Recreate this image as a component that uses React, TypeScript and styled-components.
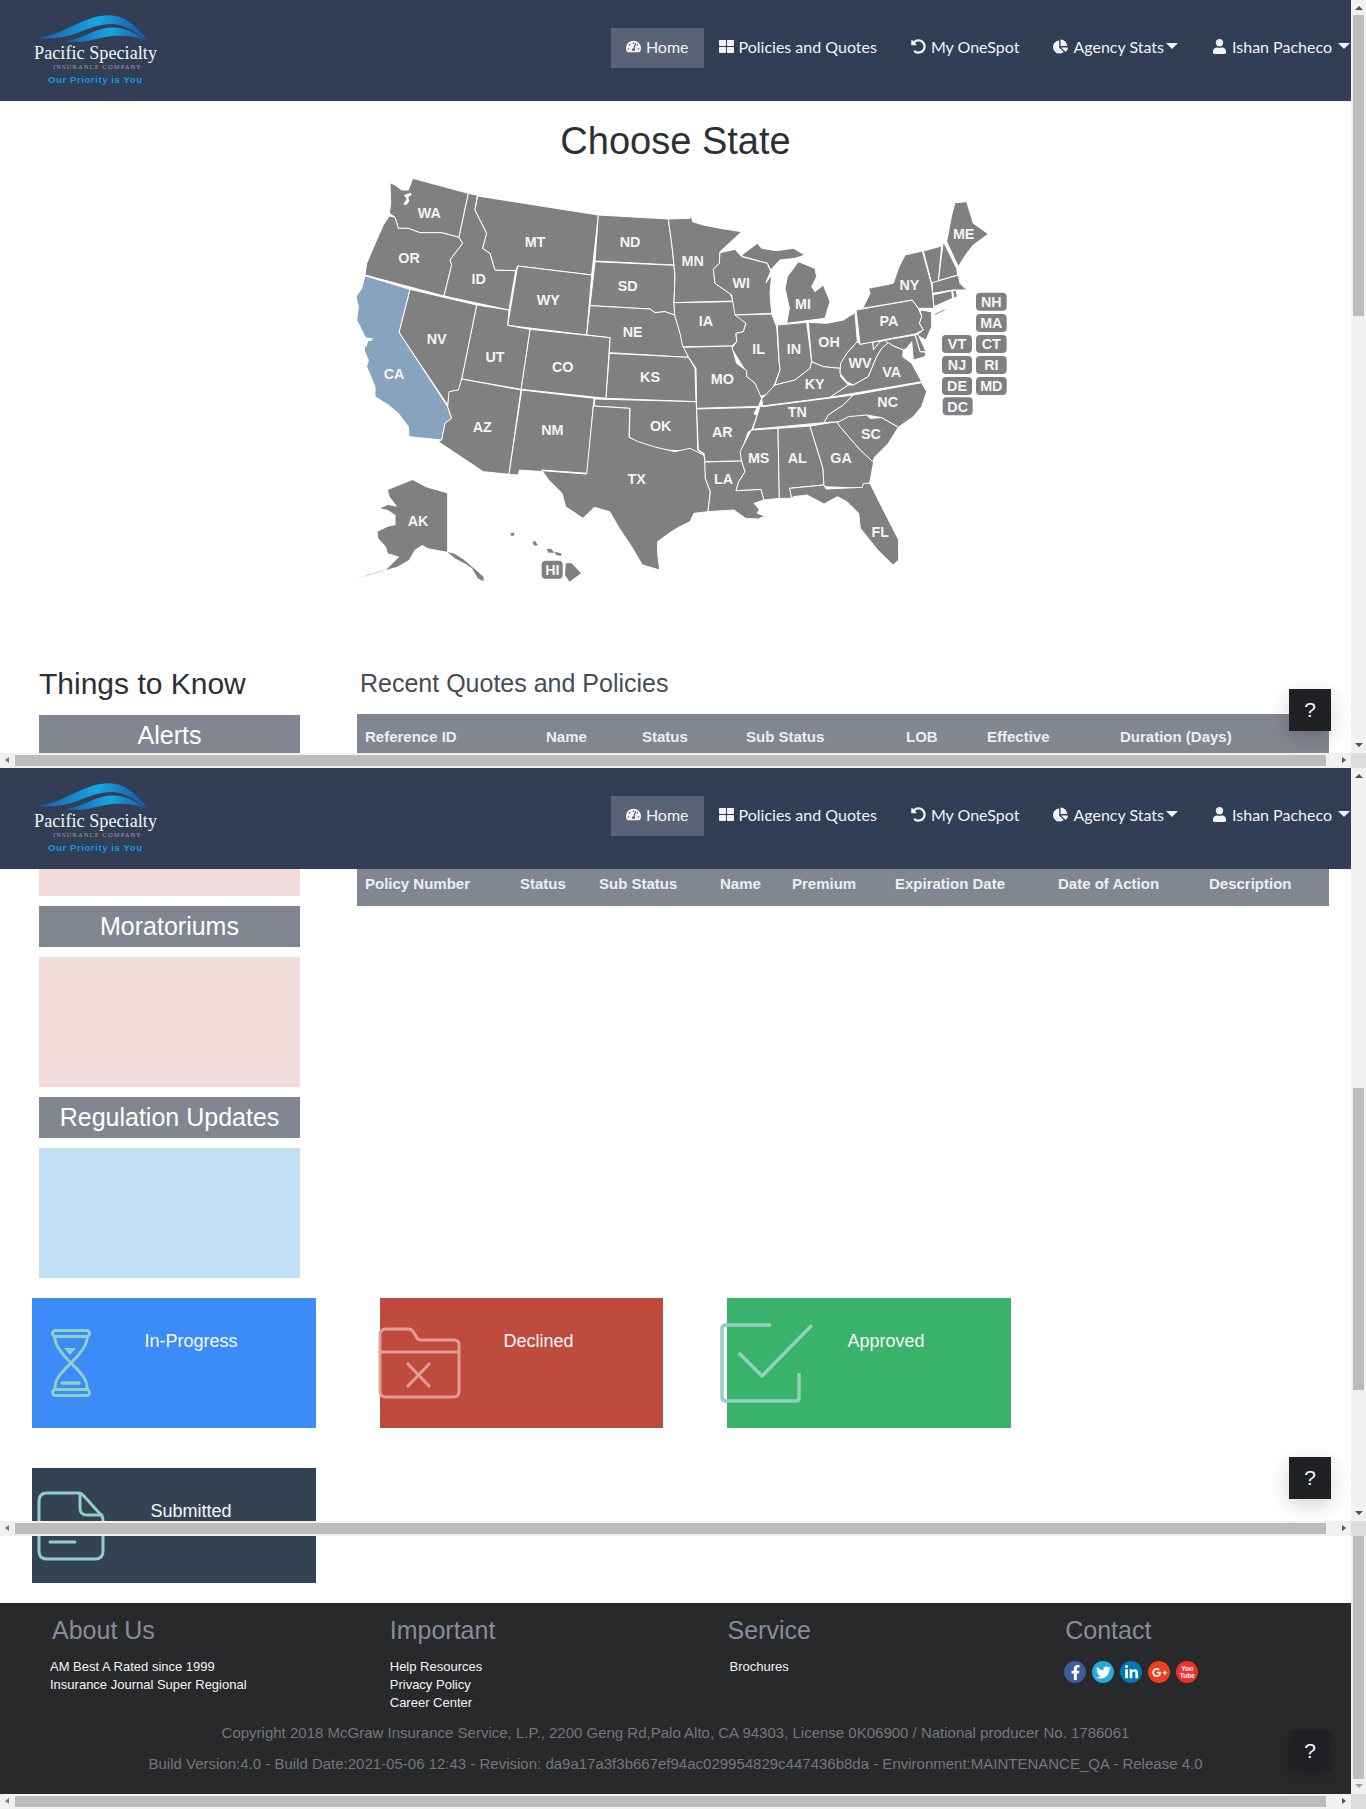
import React from "react";
import styled, { createGlobalStyle } from "styled-components";
import {
  FaTachometerAlt,
  FaThLarge,
  FaUndoAlt,
  FaChartPie,
  FaUser,
  FaFacebookF,
  FaTwitter,
  FaLinkedinIn,
  FaGooglePlusG,
} from "react-icons/fa";

const GlobalStyle = createGlobalStyle`
  html, body {
    margin: 0;
    padding: 0;
    background: #fff;
  }
  body {
    font-family: "Liberation Sans", Arial, sans-serif;
  }
  * {
    box-sizing: border-box;
  }
`;

const colors = {
  navy: "#323e55",
  navActive: "#5a6376",
  slate: "#828690",
  grey: "#808080",
  caBlue: "#87a3bd",
  pink: "#f1dcdb",
  sky: "#c2e0f3",
  footer: "#28292b",
  heading: "#2b3036",
  teal: "#8fd0c4",
};

/* page */

const Shell = styled.div`
  position: relative;
  width: 1366px;
  height: 1809px;
  overflow: hidden;
  padding-right: 15px;
`;

/* header */

const HeaderBar = styled.header`
  display: flex;
  align-items: flex-start;
  justify-content: space-between;
  width: 1351px;
  height: 101px;
  background: ${colors.navy};
`;

const LogoSvg = styled.svg`
  display: block;
  flex: none;
  width: 170px;
  height: 101px;
`;

const Nav = styled.nav`
  display: flex;
  align-items: center;
  height: 40px;
  margin-top: 28px;
`;

const NavItem = styled.a<{ $active?: boolean; $gap?: number }>`
  display: flex;
  align-items: center;
  gap: 5px;
  height: 40px;
  padding: 0 15px 4px;
  margin-right: ${({ $gap }) => $gap ?? 4}px;
  background: ${({ $active }) => ($active ? colors.navActive : "transparent")};
  color: #f1f2f4;
  font-family: "Lato", sans-serif;
  font-size: 16px;
  white-space: nowrap;

  svg {
    font-size: 15px;
  }

  &:last-child {
    padding-right: 1px;
  }
`;

const Caret = styled.span<{ $offset: number }>`
  width: 0;
  height: 0;
  margin-left: ${({ $offset }) => $offset}px;
  border-left: 6px solid transparent;
  border-right: 6px solid transparent;
  border-top: 6px solid #f1f2f4;
`;

const SecondHeader = styled.div`
  position: absolute;
  top: 768px;
  left: 0;
`;

const PacificLogo = () => (
  <LogoSvg viewBox="0 0 170 101">
    <defs>
      <linearGradient id="wave" x1="0" y1="0" x2="1" y2="0">
        <stop offset="0" stopColor="#1a5aa8" />
        <stop offset="0.55" stopColor="#16a7e2" />
        <stop offset="1" stopColor="#1c4f9c" />
      </linearGradient>
    </defs>
    <path
      d="M36 38 C58 36 72 24 92 18 C108 13 122 15 132 24 C138 29 144 35 148 41 C138 34 130 28 120 25 C106 22 92 27 80 32 C66 38 50 39 36 38 Z"
      fill="url(#wave)"
    />
    <path
      d="M66 41 C82 39 90 31 106 28 C120 26 132 30 147 41 C134 36 124 35 112 36 C96 38 84 44 66 41 Z"
      fill="url(#wave)"
    />
    <text x="34" y="59" fontFamily="'Liberation Serif', serif" fontSize="19.5" fill="#f2f3f5" textLength="123" lengthAdjust="spacingAndGlyphs">
      Pacific Specialty
    </text>
    <text x="53" y="69" fontFamily="'Liberation Serif', serif" fontSize="6.5" fill="#9ba1ad" textLength="88">
      INSURANCE COMPANY
    </text>
    <text x="48" y="83" fontFamily="'Liberation Sans', sans-serif" fontSize="9.5" fontWeight="700" fill="#0a9fe0" textLength="94">
      Our Priority is You
    </text>
  </LogoSvg>
);

const Header = () => (
  <HeaderBar>
    <PacificLogo />
    <Nav>
      <NavItem $active $gap={0}>
        <FaTachometerAlt />
        Home
      </NavItem>
      <NavItem>
        <FaThLarge />
        Policies and Quotes
      </NavItem>
      <NavItem>
        <FaUndoAlt />
        My OneSpot
      </NavItem>
      <NavItem>
        <FaChartPie />
        Agency Stats
        <Caret $offset={-3} />
      </NavItem>
      <NavItem $gap={0}>
        <FaUser />
        Ishan Pacheco
        <Caret $offset={1} />
      </NavItem>
    </Nav>
  </HeaderBar>
);

/* map */

const Title = styled.h1`
  margin: 0;
  padding-top: 16px;
  height: 64px;
  font-size: 38px;
  line-height: 48px;
  font-weight: 400;
  text-align: center;
  color: ${colors.heading};
`;

const MapSvg = styled.svg`
  display: block;
  width: 671px;
  height: 425px;
  margin: 0 auto;
`;

const StatePath = styled.path<{ $active?: boolean }>`
  fill: ${({ $active }) => ($active ? colors.caBlue : colors.grey)};
  stroke: #fff;
  stroke-width: 3;
  stroke-linejoin: round;
`;

const IslandPath = styled.path`
  fill: ${colors.grey};
`;

const WaterPath = styled.path`
  fill: #fff;
`;

const StateLabel = styled.text`
  fill: #f4f4f4;
  font-family: "Liberation Sans", sans-serif;
  font-weight: 700;
  font-size: 43px;
  text-anchor: middle;
  dominant-baseline: central;
`;

const BadgeRect = styled.rect`
  fill: ${colors.grey};
`;

type StateDef = { name: string; d: string; x: number; y: number; active?: boolean };

const westStates: StateDef[] = [
  { name: "WA", x: 268, y: 160, d: "M150 68 L165 75 L185 90 L205 90 L218 55 L385 100 L357 232 L305 218 L240 218 L205 205 L175 205 L165 172 L148 160 L152 130 Z" },
  { name: "OR", x: 207, y: 295, d: "M148 168 L165 172 L175 205 L205 205 L240 218 L305 218 L357 232 L368 250 L330 300 L335 315 L312 408 L75 345 L80 310 L110 240 L130 195 Z" },
  { name: "ID", x: 416, y: 358, d: "M385 100 L412 106 L405 150 L440 220 L428 265 L450 280 L465 330 L527 332 L507 450 L312 408 L335 315 L330 300 L368 250 L357 232 Z" },
  { name: "MT", x: 585, y: 245, d: "M413 108 L775 165 L755 345 L533 318 L527 332 L465 330 L450 280 L428 265 L440 220 L405 150 Z" },
  { name: "ND", x: 870, y: 245, d: "M775 165 L985 177 L995 250 L1002 315 L765 303 Z" },
  { name: "SD", x: 863, y: 378, d: "M765 305 L1002 316 L1005 350 L1002 430 L1004 465 L975 455 L945 458 L930 447 L750 437 Z" },
  { name: "WY", x: 625, y: 420, d: "M533 318 L755 345 L740 525 L503 496 Z" },
  { name: "NE", x: 878, y: 517, d: "M750 437 L930 447 L945 458 L975 455 L1004 465 L1020 515 L1030 555 L1045 592 L808 578 L810 533 L740 525 Z" },
  { name: "CO", x: 668, y: 622, d: "M570 508 L810 533 L798 715 L543 688 Z" },
  { name: "KS", x: 930, y: 652, d: "M808 580 L1045 592 L1065 625 L1068 725 L798 715 Z" },
  { name: "UT", x: 465, y: 590, d: "M410 435 L507 450 L503 496 L570 508 L543 688 L365 657 Z" },
  { name: "NV", x: 290, y: 538, d: "M210 388 L410 435 L365 657 L357 690 L330 695 L323 735 L177 517 Z" },
  { name: "CA", x: 162, y: 642, active: true, d: "M75 347 L210 388 L177 517 L323 740 L335 775 L315 790 L305 840 L207 830 L205 800 L175 760 L145 735 L105 710 L105 680 L80 620 L85 600 L72 570 L80 540 L50 480 L55 440 L48 410 L65 385 Z" },
  { name: "AZ", x: 427, y: 800, d: "M365 657 L543 690 L507 943 L430 935 L295 845 L305 840 L315 790 L335 775 L323 740 L327 695 L355 690 Z" },
  { name: "NM", x: 637, y: 810, d: "M545 690 L762 715 L760 737 L742 940 L605 930 L610 935 L538 930 L535 945 L507 943 Z" },
  { name: "OK", x: 962, y: 798, d: "M765 717 L1068 725 L1070 745 L1073 870 L1091 884 L1050 875 L1020 872 L970 870 L930 860 L890 848 L868 830 L870 745 L762 738 Z" },
  { name: "TX", x: 890, y: 958, d: "M760 738 L869 745 L867 832 L895 845 L941 860 L1004 875 L1050 865 L1091 885 L1096 905 L1096 955 L1111 995 L1104 1055 L1062 1060 L1050 1085 L1010 1105 L987 1120 L953 1145 L953 1180 L959 1230 L907 1215 L875 1160 L838 1105 L809 1055 L763 1042 L729 1075 L677 1040 L666 1000 L626 960 L606 932 L740 942 Z" },
];

const eastStates: StateDef[] = [
  { name: "MN", x: 38, y: 303, d: "M-35 177 L30 175 L32 160 L38 185 L70 195 L120 205 L185 215 L120 275 L118 310 L100 328 L105 370 L150 400 L160 423 L-18 428 L-15 350 L-18 315 L-25 250 Z" },
  { name: "IA", x: 78, y: 484, d: "M-18 428 L160 425 L172 462 L198 490 L190 515 L168 520 L170 545 L155 558 L8 560 L0 520 L-16 465 Z" },
  { name: "WI", x: 184, y: 370, d: "M120 278 L165 268 L185 290 L262 310 L272 335 L265 350 L258 368 L275 345 L270 400 L275 460 L165 465 L155 405 L105 370 L100 328 L118 310 Z" },
  { name: "MI", x: 369, y: 432, d: "M355 305 L405 325 L410 350 L395 380 L405 395 L430 375 L450 425 L435 475 L320 490 L328 445 L315 385 L322 350 Z" },
  { name: "IL", x: 236, y: 568, d: "M165 465 L275 462 L290 500 L297 600 L300 630 L285 670 L270 700 L240 710 L225 670 L200 650 L195 630 L155 565 L170 545 L168 520 L190 515 L198 490 Z" },
  { name: "IN", x: 342, y: 568, d: "M292 495 L380 487 L395 605 L390 625 L345 660 L285 675 L300 630 L297 600 Z" },
  { name: "OH", x: 447, y: 546, d: "M385 487 L440 490 L490 480 L525 458 L532 545 L500 580 L480 625 L430 620 L395 605 Z" },
  { name: "MO", x: 127, y: 657, d: "M10 562 L155 558 L170 610 L200 632 L200 650 L225 670 L245 715 L235 740 L215 740 L50 745 L48 625 L25 590 Z" },
  { name: "AR", x: 127, y: 817, d: "M50 747 L232 742 L222 762 L232 765 L215 810 L205 815 L182 880 L185 903 L75 905 L72 880 L55 870 Z" },
  { name: "LA", x: 131, y: 958, d: "M74 906 L185 903 L195 935 L176 965 L168 992 L243 988 L252 1020 L222 1030 L238 1048 L232 1060 L275 1075 L250 1070 L235 1077 L197 1075 L162 1050 L84 1055 L91 995 L76 955 Z" },
  { name: "MS", x: 236, y: 895, d: "M214 810 L294 805 L298 1015 L252 1020 L243 988 L168 992 L176 965 L195 935 L185 903 L180 875 Z" },
  { name: "AL", x: 352, y: 895, d: "M294 805 L390 798 L429 925 L432 975 L329 985 L335 1015 L298 1015 Z" },
  { name: "GA", x: 483, y: 895, d: "M390 798 L472 785 L480 800 L541 870 L581 905 L570 965 L550 985 L432 980 L429 925 Z" },
  { name: "FL", x: 601, y: 1115, d: "M329 985 L432 975 L438 987 L547 982 L550 970 L570 970 L610 1050 L656 1140 L656 1200 L639 1215 L593 1170 L541 1105 L536 1060 L501 1025 L472 1010 L432 1032 L381 1005 L340 1010 L335 1015 Z" },
  { name: "TN", x: 352, y: 757, d: "M248 740 L520 705 L490 735 L445 765 L432 788 L218 808 L232 765 L240 738 Z" },
  { name: "KY", x: 404, y: 672, d: "M250 712 L285 675 L345 660 L390 625 L395 605 L430 620 L480 625 L482 650 L505 675 L450 712 L248 738 L245 715 Z" },
  { name: "WV", x: 540, y: 610, d: "M500 580 L532 545 L540 553 L578 545 L580 570 L600 545 L618 540 L625 555 L605 565 L590 590 L565 650 L520 675 L500 665 L480 640 L482 610 Z" },
  { name: "VA", x: 635, y: 636, d: "M625 548 L640 558 L670 570 L668 590 L695 610 L725 665 L450 712 L505 675 L520 675 L565 650 L590 590 L605 565 Z" },
  { name: "NC", x: 623, y: 727, d: "M520 705 L725 668 L740 695 L725 740 L700 770 L655 802 L605 773 L560 765 L475 785 L432 788 L445 765 L490 735 Z" },
  { name: "SC", x: 573, y: 822, d: "M472 788 L505 770 L560 765 L570 775 L605 773 L655 802 L625 850 L585 890 L578 905 L541 870 L480 800 Z" },
  { name: "PA", x: 627, y: 484, d: "M528 450 L697 420 L715 445 L725 470 L718 490 L730 510 L705 522 L540 553 Z" },
  { name: "NY", x: 688, y: 376, d: "M548 445 L570 400 L565 385 L640 370 L655 325 L675 285 L727 273 L755 375 L762 445 L715 445 L697 420 Z" },
  { name: "ME", x: 851, y: 222, d: "M800 245 L815 165 L825 128 L860 125 L880 190 L925 222 L880 255 L860 280 L835 320 Z" },
];

const smallStates: string[] = [
  "M720 450 L755 455 L755 500 L738 540 L710 525 L730 510 L718 490 L725 470 Z",
  "M705 522 L720 575 L738 575 L715 525 Z",
  "M540 553 L705 525 L720 575 L738 577 L735 590 L700 600 L695 545 L680 565 L670 570 L640 558 L625 550 L600 545 L580 570 L578 545 Z",
  "M730 273 L785 258 L775 365 L755 370 Z",
  "M790 245 L830 325 L833 345 L775 362 Z",
  "M757 368 L835 345 L840 370 L860 390 L820 390 L757 400 Z",
  "M758 405 L815 392 L818 415 L762 440 Z",
  "M818 392 L828 390 L832 410 L822 415 Z",
  "M760 462 L800 445 L795 452 L765 466 Z",
  "M185 285 L232 250 L245 265 L290 272 L340 265 L375 285 L345 295 L300 300 L272 330 L262 310 L190 290 Z",
];

const badges = [
  { name: "NH", x: 888, y: 398, w: 92 },
  { name: "MA", x: 888, y: 462, w: 92 },
  { name: "CT", x: 888, y: 525, w: 92 },
  { name: "RI", x: 888, y: 588, w: 92 },
  { name: "MD", x: 888, y: 651, w: 92 },
  { name: "VT", x: 786, y: 525, w: 90 },
  { name: "NJ", x: 786, y: 588, w: 90 },
  { name: "DE", x: 786, y: 651, w: 90 },
  { name: "DC", x: 788, y: 712, w: 90 },
];

const USMap = () => (
  <MapSvg viewBox="0 15 2013 1275">
    {westStates.map((s) => (
      <StatePath key={s.name} d={s.d} $active={s.active} />
    ))}
    <WaterPath d="M190 132 L200 118 L192 105 L212 98 L215 104 L205 112 L208 124 L198 136 Z" />
    <WaterPath d="M72 532 L98 535 L96 542 L84 544 L80 560 L72 556 Z" />
    {westStates.map((s) => (
      <StateLabel key={s.name} x={s.x} y={s.y}>
        {s.name}
      </StateLabel>
    ))}
    <g transform="translate(1020 0)">
      {smallStates.map((d) => (
        <StatePath key={d} d={d} />
      ))}
      {eastStates.map((s) => (
        <StatePath key={s.name} d={s.d} />
      ))}
      {eastStates.map((s) => (
        <StateLabel key={s.name} x={s.x} y={s.y}>
          {s.name}
        </StateLabel>
      ))}
      {badges.map((b) => (
        <g key={b.name}>
          <BadgeRect x={b.x} y={b.y} width={b.w} height={54} rx={12} />
          <StateLabel x={b.x + b.w / 2} y={b.y + 28}>
            {b.name}
          </StateLabel>
        </g>
      ))}
    </g>
    <g transform="translate(0 720) scale(1.148 1)">
      <IslandPath d="M125 270 L190 240 L225 262 L280 280 L280 455 L230 445 L215 435 L195 450 L180 480 L150 500 L120 510 L155 470 L125 460 L120 440 L100 415 L98 395 L125 380 L145 375 L145 345 L125 330 L105 325 L125 315 L150 320 L130 290 Z" />
      <IslandPath d="M280 455 L300 462 L322 478 L345 500 L375 530 L375 544 L360 535 L345 505 L325 490 L300 475 Z" />
      <IslandPath d="M120 510 L95 518 L60 530 L40 538 L70 526 L105 514 Z" />
      <IslandPath d="M445 400 L455 398 L455 407 L447 407 Z" />
      <IslandPath d="M503 425 L510 423 L517 436 L507 437 Z" />
      <IslandPath d="M540 446 L552 447 L560 458 L545 458 Z" />
      <IslandPath d="M560 455 L578 460 L578 468 L565 465 Z" />
      <IslandPath d="M590 490 L605 490 L630 520 L600 545 L588 525 Z" />
    </g>
    <StateLabel x={234} y={1084}>AK</StateLabel>
    <BadgeRect x={605} y={1202} width={63} height={54} rx={12} />
    <StateLabel x={637} y={1230}>HI</StateLabel>
  </MapSvg>
);

/* things to know + tables */

const InfoRow = styled.section`
  display: grid;
  grid-template-columns: 261px 972px;
  column-gap: 57px;
  padding: 75px 0 0 39px;
`;

const SideHeading = styled.h2`
  margin: 0 0 12px;
  font-size: 30px;
  line-height: 38px;
  font-weight: 400;
  color: ${colors.heading};
`;

const Panel = styled.div`
  display: flex;
  flex-direction: column;
  gap: 10px;
`;

const PanelTitle = styled.div`
  height: 41px;
  background: ${colors.slate};
  color: #fff;
  font-size: 25px;
  line-height: 41px;
  text-align: center;
`;

const PanelBody = styled.div<{ $tone: string }>`
  height: 130px;
  background: ${({ $tone }) => $tone};
`;

const TableColumn = styled.div`
  padding-top: 4px;
`;

const TableHeading = styled.h3`
  margin: 0 0 16px 3px;
  font-size: 25px;
  line-height: 29px;
  font-weight: 400;
  color: #464c55;
`;

const HeadRow = styled.div<{ $columns: string; $height: number; $gapAfter?: number }>`
  display: grid;
  grid-template-columns: ${({ $columns }) => $columns};
  align-items: center;
  height: ${({ $height }) => $height}px;
  padding-left: 8px;
  margin-bottom: ${({ $gapAfter }) => $gapAfter ?? 0}px;
  background: ${colors.slate};
`;

const HeadCell = styled.span`
  color: #eceef0;
  font-size: 15px;
  font-weight: 700;
  white-space: nowrap;
`;

const quoteColumns = ["Reference ID", "Name", "Status", "Sub Status", "LOB", "Effective", "Duration (Days)"];
const policyColumns = ["Policy Number", "Status", "Sub Status", "Name", "Premium", "Expiration Date", "Date of Action", "Description"];

/* status cards */

const CardGrid = styled.section`
  display: grid;
  grid-template-columns: 284px 283px 284px;
  column-gap: 64px;
  row-gap: 40px;
  margin: 20px 0 20px 32px;
`;

const Card = styled.div<{ $bg: string; $tall?: boolean }>`
  position: relative;
  height: ${({ $tall }) => ($tall ? 130 : 115)}px;
  padding: 32px 0 0 34px;
  background: ${({ $bg }) => $bg};
`;

const CardLabel = styled.div`
  color: #f8f8f8;
  font-size: 18px;
  line-height: 22px;
  text-align: center;
`;

const CardIcon = styled.svg<{ $left: number; $top: number; $tint: string }>`
  position: absolute;
  left: ${({ $left }) => $left}px;
  top: ${({ $top }) => $top}px;
  fill: none;
  stroke: ${({ $tint }) => $tint};
  stroke-linecap: round;
  stroke-linejoin: round;
`;

const HourglassIcon = () => (
  <CardIcon $left={19} $top={31} $tint={colors.teal} width="40" height="68" viewBox="0 0 40 68" strokeWidth="3">
    <rect x="1.5" y="1.5" width="37" height="6" rx="3" />
    <rect x="1.5" y="60.5" width="37" height="6" rx="3" />
    <path d="M4 8 C3 16 12 26 20 34 C28 42 37 50 36 60" />
    <path d="M36 8 C37 16 28 26 20 34 C12 42 3 50 4 60" />
    <path d="M13 19 H25 L19 26 Z" fill={colors.teal} stroke="none" />
    <path d="M11 54 H28" strokeWidth="3.5" />
  </CardIcon>
);

const FolderIcon = () => (
  <CardIcon $left={-2} $top={29} $tint="#e09e96" width="84" height="73" viewBox="0 0 84 73" strokeWidth="3">
    <path d="M2 8 Q2 2 8 2 H30 Q34 2 36 6 L39 11 Q40 13 44 13 H76 Q81 13 81 18 V64 Q81 70 75 70 H8 Q2 70 2 64 Z" />
    <path d="M2 25 H81" />
    <path d="M29 36 L52 60 M52 36 L29 60" strokeLinecap="butt" />
  </CardIcon>
);

const CheckIcon = () => (
  <CardIcon $left={-7} $top={25} $tint="#93d0bf" width="94" height="82" viewBox="0 0 94 82" strokeWidth="3.5">
    <path d="M51 2 H6 Q2 2 2 6 V74 Q2 78 6 78 H76 Q79 78 79 75 V50" strokeLinecap="butt" />
    <path d="M19 30 L42 53 L92 2" strokeLinecap="butt" />
  </CardIcon>
);

const DocIcon = () => (
  <CardIcon $left={5} $top={23} $tint={colors.teal} width="68" height="70" viewBox="0 0 68 70" strokeWidth="3">
    <path d="M10 2 H42 Q44 2 46 4 L64 24 Q66 26 66 29 V60 Q66 68 58 68 H10 Q2 68 2 60 V10 Q2 2 10 2 Z" />
    <path d="M43 3 V17 Q43 24 50 24 H65" />
    <path d="M13 51 H38" />
  </CardIcon>
);

/* footer */

const FooterBar = styled.footer`
  width: 1351px;
  height: 191px;
  padding-top: 13px;
  background: ${colors.footer};
`;

const FooterColumns = styled.div`
  display: grid;
  grid-template-columns: repeat(4, 337.75px);
  height: 96px;
  margin-bottom: 10px;
`;

const FooterColumn = styled.div`
  padding-left: 52px;
`;

const FooterHeading = styled.h4`
  margin: 0 0 13px;
  font-size: 25px;
  line-height: 29px;
  font-weight: 400;
  color: #878c9a;
`;

const FooterLink = styled.div<{ $indent?: number }>`
  margin-left: ${({ $indent }) => $indent ?? 0}px;
  color: #f4f4f4;
  font-size: 13px;
  line-height: 18px;
`;

const SocialRow = styled.div`
  display: flex;
  gap: 6px;
  padding-top: 3px;
  margin-left: -1px;
`;

const SocialBadge = styled.span<{ $bg: string }>`
  display: flex;
  flex-direction: column;
  align-items: center;
  justify-content: center;
  width: 22px;
  height: 22px;
  border-radius: 50%;
  background: ${({ $bg }) => $bg};
  color: #fff;
  font-size: 15px;
`;

const TubeText = styled.span`
  font-family: "Liberation Sans", sans-serif;
  font-size: 6.5px;
  line-height: 7px;
  font-weight: 700;
`;

const CopyLine = styled.p`
  margin: 0 0 9px;
  color: #74777d;
  font-size: 15px;
  line-height: 22px;
  text-align: center;
`;

/* overlays: the stitched browser scrollbars and help buttons */

const HelpButton = styled.button<{ $top: number }>`
  position: absolute;
  top: ${({ $top }) => $top}px;
  left: 1289px;
  width: 42px;
  height: 42px;
  padding: 0;
  border: 0;
  background: #1f2125;
  color: #f5f5f5;
  font-family: "Liberation Sans", sans-serif;
  font-size: 21px;
  box-shadow: 0 6px 20px rgba(0, 0, 0, 0.18);
`;

const HScroll = styled.div<{ $top: number }>`
  position: absolute;
  top: ${({ $top }) => $top}px;
  left: 0;
  display: flex;
  align-items: center;
  width: 1366px;
  height: 15px;
  background: #f1f1f1;
`;

const HThumb = styled.div`
  margin-left: 15px;
  width: 1311px;
  height: 11px;
  background: #bcbcbc;
`;

const ArrowLeft = styled.span`
  position: absolute;
  left: 5px;
  top: 4px;
  border-top: 3.5px solid transparent;
  border-bottom: 3.5px solid transparent;
  border-right: 4px solid #7a7a7a;
`;

const ArrowRight = styled.span`
  position: absolute;
  left: 1342px;
  top: 4px;
  border-top: 3.5px solid transparent;
  border-bottom: 3.5px solid transparent;
  border-left: 4px solid #505050;
`;

const Corner = styled.span`
  position: absolute;
  right: 0;
  top: 0;
  width: 15px;
  height: 15px;
  background: #dcdcdc;
`;

const VTrack = styled.div<{ $top: number; $height: number }>`
  position: absolute;
  top: ${({ $top }) => $top}px;
  left: 1351px;
  width: 15px;
  height: ${({ $height }) => $height}px;
  background: #f1f1f1;
`;

const VThumb = styled.div<{ $top: number; $height: number }>`
  position: absolute;
  top: ${({ $top }) => $top}px;
  left: 2px;
  width: 11px;
  height: ${({ $height }) => $height}px;
  background: #bcbcbc;
`;

const ArrowUp = styled.span<{ $top: number }>`
  position: absolute;
  top: ${({ $top }) => $top}px;
  left: 3.5px;
  border-left: 4px solid transparent;
  border-right: 4px solid transparent;
  border-bottom: 4px solid #505050;
`;

const ArrowDown = styled.span<{ $top: number; $tone?: string }>`
  position: absolute;
  top: ${({ $top }) => $top}px;
  left: 3.5px;
  border-left: 4px solid transparent;
  border-right: 4px solid transparent;
  border-top: 4px solid ${({ $tone }) => $tone ?? "#505050"};
`;

const BottomBar = ({ top }: { top: number }) => (
  <HScroll $top={top}>
    <HThumb />
    <ArrowLeft />
    <ArrowRight />
    <Corner />
  </HScroll>
);

export default function App() {
  return (
    <>
      <GlobalStyle />
      <Shell>
        <Header />
        <Title>Choose State</Title>
        <USMap />

        <InfoRow>
          <div>
            <SideHeading>Things to Know</SideHeading>
            <Panel>
              <PanelTitle>Alerts</PanelTitle>
              <PanelBody $tone={colors.pink} />
              <PanelTitle>Moratoriums</PanelTitle>
              <PanelBody $tone={colors.pink} />
              <PanelTitle>Regulation Updates</PanelTitle>
              <PanelBody $tone={colors.sky} />
            </Panel>
          </div>
          <TableColumn>
            <TableHeading>Recent Quotes and Policies</TableHeading>
            <HeadRow $columns="181px 96px 104px 160px 81px 133px 1fr" $height={44} $gapAfter={102}>
              {quoteColumns.map((c) => (
                <HeadCell key={c}>{c}</HeadCell>
              ))}
            </HeadRow>
            <HeadRow $columns="155px 79px 121px 72px 103px 163px 151px 1fr" $height={46}>
              {policyColumns.map((c) => (
                <HeadCell key={c}>{c}</HeadCell>
              ))}
            </HeadRow>
          </TableColumn>
        </InfoRow>

        <CardGrid>
          <Card $bg="#3b8cf8" $tall>
            <HourglassIcon />
            <CardLabel>In-Progress</CardLabel>
          </Card>
          <Card $bg="#be4b3d" $tall>
            <FolderIcon />
            <CardLabel>Declined</CardLabel>
          </Card>
          <Card $bg="#39b26a" $tall>
            <CheckIcon />
            <CardLabel>Approved</CardLabel>
          </Card>
          <Card $bg="#344354">
            <DocIcon />
            <CardLabel>Submitted</CardLabel>
          </Card>
        </CardGrid>

        <FooterBar>
          <FooterColumns>
            <FooterColumn>
              <FooterHeading>About Us</FooterHeading>
              <FooterLink $indent={-2}>AM Best A Rated since 1999</FooterLink>
              <FooterLink $indent={-2}>Insurance Journal Super Regional</FooterLink>
            </FooterColumn>
            <FooterColumn>
              <FooterHeading>Important</FooterHeading>
              <FooterLink>Help Resources</FooterLink>
              <FooterLink>Privacy Policy</FooterLink>
              <FooterLink>Career Center</FooterLink>
            </FooterColumn>
            <FooterColumn>
              <FooterHeading>Service</FooterHeading>
              <FooterLink $indent={2}>Brochures</FooterLink>
            </FooterColumn>
            <FooterColumn>
              <FooterHeading>Contact</FooterHeading>
              <SocialRow>
                <SocialBadge $bg="#3e5c9a">
                  <FaFacebookF />
                </SocialBadge>
                <SocialBadge $bg="#28a9e0">
                  <FaTwitter />
                </SocialBadge>
                <SocialBadge $bg="#0077b5">
                  <FaLinkedinIn />
                </SocialBadge>
                <SocialBadge $bg="#f13f24">
                  <FaGooglePlusG />
                </SocialBadge>
                <SocialBadge $bg="#f2302a">
                  <TubeText>You</TubeText>
                  <TubeText>Tube</TubeText>
                </SocialBadge>
              </SocialRow>
            </FooterColumn>
          </FooterColumns>
          <CopyLine>Copyright 2018 McGraw Insurance Service, L.P., 2200 Geng Rd,Palo Alto, CA 94303, License 0K06900 / National producer No. 1786061</CopyLine>
          <CopyLine>Build Version:4.0 - Build Date:2021-05-06 12:43 - Revision: da9a17a3f3b667ef94ac029954829c447436b8da - Environment:MAINTENANCE_QA - Release 4.0</CopyLine>
        </FooterBar>

        <SecondHeader>
          <Header />
        </SecondHeader>

        <VTrack $top={0} $height={753}>
          <ArrowUp $top={6} />
          <VThumb $top={15} $height={301} />
          <ArrowDown $top={743} />
        </VTrack>
        <VTrack $top={768} $height={753}>
          <ArrowUp $top={6} />
          <VThumb $top={320} $height={302} />
          <ArrowDown $top={743} />
        </VTrack>
        <VTrack $top={1536} $height={258}>
          <VThumb $top={0} $height={243} />
          <ArrowDown $top={248} $tone="#a0a0a0" />
        </VTrack>

        <BottomBar top={753} />
        <BottomBar top={1521} />
        <BottomBar top={1794} />

        <HelpButton $top={689}>?</HelpButton>
        <HelpButton $top={1457}>?</HelpButton>
        <HelpButton $top={1730}>?</HelpButton>
      </Shell>
    </>
  );
}
